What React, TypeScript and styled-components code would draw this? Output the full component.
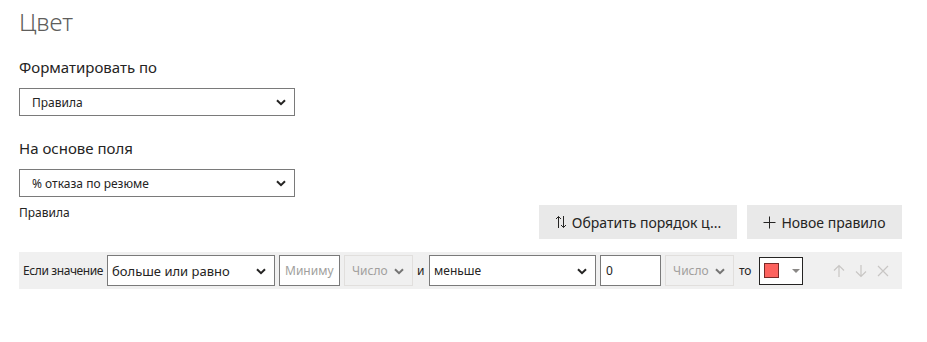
import React from "react"
import styled, { createGlobalStyle } from "styled-components"

const Global = createGlobalStyle`
  body {
    margin: 0;
    background: #ffffff;
    font-family: "Noto Sans", "Open Sans", sans-serif;
    color: #252423;
  }
`

const Page = styled.div`
  width: 883px;
  padding: 6px 0 0 19px;
`

const Title = styled.h1`
  margin: 0;
  font-size: 24px;
  font-weight: 300;
  color: #605e5c;
  line-height: 32px;
`

const SectionLabel = styled.div<{ $mt: number }>`
  margin-top: ${(p) => p.$mt}px;
  font-size: 15px;
  line-height: 20px;
  color: #252423;
`

const SelectBox = styled.div<{ $w: number; $h: number; $disabled?: boolean }>`
  position: relative;
  width: ${(p) => p.$w}px;
  height: ${(p) => p.$h}px;
  box-sizing: border-box;
  border: 1px solid ${(p) => (p.$disabled ? "#e1dfdd" : "#7a7a7a")};
  background: ${(p) => (p.$disabled ? "#f0f0f0" : "#ffffff")};
  flex: none;
`

const NativeSelect = styled.select<{ $pad: number; $size: number; $disabled?: boolean }>`
  appearance: none;
  width: 100%;
  height: 100%;
  border: 0;
  outline: none;
  background: transparent;
  padding: 0 20px 0 ${(p) => p.$pad}px;
  font-family: "Noto Sans", "Open Sans", sans-serif;
  font-size: ${(p) => p.$size}px;
  color: ${(p) => (p.$disabled ? "#a19f9d" : "#252423")};
`

const Chevron = styled.svg<{ $faded?: boolean }>`
  position: absolute;
  right: 8px;
  top: 50%;
  margin-top: -3px;
  width: 10px;
  height: 7px;
  pointer-events: none;
  opacity: ${(p) => (p.$faded ? 0.6 : 1)};
`

const FieldSelect = styled(SelectBox)`
  margin-top: 11px;
`

const RulesHeader = styled.div`
  display: flex;
  justify-content: space-between;
  align-items: flex-start;
  margin-top: 8px;
`

const SmallLabel = styled.div`
  font-size: 12px;
  line-height: 16px;
  color: #252423;
`

const Buttons = styled.div`
  display: flex;
  gap: 10px;
`

const GrayButton = styled.button<{ $w: number }>`
  display: flex;
  align-items: center;
  justify-content: center;
  gap: 5px;
  width: ${(p) => p.$w}px;
  height: 34px;
  border: 0;
  background: #e9e9e9;
  font-family: "Noto Sans", "Open Sans", sans-serif;
  font-size: 14px;
  color: #252423;
  padding: 0;
`

const RuleRow = styled.div`
  display: flex;
  align-items: center;
  height: 37px;
  margin-top: 13px;
  padding: 0 4px;
  background: #f0f0f0;
  gap: 4px;
`

const RowText = styled.span<{ $ml?: number; $mr?: number }>`
  font-size: 12px;
  letter-spacing: -0.4px;
  color: #252423;
  margin: 0 ${(p) => p.$mr ?? 0}px 0 ${(p) => p.$ml ?? 0}px;
  white-space: nowrap;
`

const TextInput = styled.input<{ $w: number }>`
  width: ${(p) => p.$w}px;
  height: 31px;
  box-sizing: border-box;
  border: 1px solid #7a7a7a;
  padding: 0 5px;
  font-family: "Noto Sans", "Open Sans", sans-serif;
  font-size: 12px;
  color: #252423;
  outline: none;
  flex: none;
  &::placeholder {
    color: #a19f9d;
  }
`

const ColorPicker = styled.div`
  display: flex;
  align-items: center;
  gap: 13px;
  width: 44px;
  height: 28px;
  box-sizing: border-box;
  border: 1px solid #252423;
  background: #fff;
  padding-left: 4px;
  margin-left: 4px;
`

const Swatch = styled.div`
  width: 15px;
  height: 15px;
  background: #fd625e;
  border: 1px solid #7a2a28;
  box-sizing: border-box;
`

const Caret = styled.div`
  width: 0;
  height: 0;
  border-left: 4px solid transparent;
  border-right: 4px solid transparent;
  border-top: 4px solid #8a8886;
`

const RowIcons = styled.div`
  display: flex;
  gap: 8px;
  margin-left: auto;
  margin-right: 8px;
  color: #c8c6c4;
`

const ChevronIcon = ({ faded }: { faded?: boolean }) => (
  <Chevron $faded={faded} viewBox="0 0 10 7">
    <path d="M1 1.2 L5 5.2 L9 1.2" fill="none" stroke="#252423" strokeWidth="2" />
  </Chevron>
)

const Dropdown = ({
  w,
  h,
  value,
  size = 12,
  pad = 12,
  disabled,
}: {
  w: number
  h: number
  value: string
  size?: number
  pad?: number
  disabled?: boolean
}) => (
  <SelectBox $w={w} $h={h} $disabled={disabled}>
    <NativeSelect $pad={pad} $size={size} $disabled={disabled} defaultValue={value}>
      <option>{value}</option>
    </NativeSelect>
    <ChevronIcon faded={disabled} />
  </SelectBox>
)

const Icon = ({ d }: { d: string }) => (
  <svg width="14" height="14" viewBox="0 0 14 14" fill="none" stroke="currentColor" strokeWidth="1.2">
    <path d={d} />
  </svg>
)

export default function App() {
  return (
    <>
      <Global />
      <Page>
        <Title>Цвет</Title>
        <SectionLabel $mt={19}>Форматировать по</SectionLabel>
        <FieldSelect $w={276} $h={28}>
          <NativeSelect $pad={12} $size={12} defaultValue="Правила">
            <option>Правила</option>
          </NativeSelect>
          <ChevronIcon />
        </FieldSelect>
        <SectionLabel $mt={22}>На основе поля</SectionLabel>
        <FieldSelect $w={276} $h={28}>
          <NativeSelect $pad={12} $size={12} defaultValue="% отказа по резюме">
            <option>% отказа по резюме</option>
          </NativeSelect>
          <ChevronIcon />
        </FieldSelect>
        <RulesHeader>
          <SmallLabel>Правила</SmallLabel>
          <Buttons>
            <GrayButton $w={198}>
              <svg width="12" height="14" viewBox="0 0 12 14" fill="none" stroke="#252423" strokeWidth="1">
                <path d="M3.5 13 V1.5 M1 4 L3.5 1.5 L6 4 M8.5 1 V12.5 M6 10 L8.5 12.5 L11 10" />
              </svg>
              Обратить порядок ц...
            </GrayButton>
            <GrayButton $w={155}>
              <svg width="13" height="13" viewBox="0 0 13 13" fill="none" stroke="#252423" strokeWidth="1">
                <path d="M6.5 0.5 V12.5 M0.5 6.5 H12.5" />
              </svg>
              Новое правило
            </GrayButton>
          </Buttons>
        </RulesHeader>
        <RuleRow>
          <RowText>Если значение</RowText>
          <Dropdown w={168} h={31} value="больше или равно" size={13} pad={4} />
          <TextInput $w={61} placeholder="Минимум" />
          <Dropdown w={69} h={31} value="Число" pad={7} disabled />
          <RowText $ml={0} $mr={1}>и</RowText>
          <Dropdown w={167} h={31} value="меньше" pad={4} />
          <TextInput $w={61} defaultValue="0" />
          <Dropdown w={69} h={31} value="Число" pad={7} disabled />
          <RowText $ml={1} $mr={0}>то</RowText>
          <ColorPicker>
            <Swatch />
            <Caret />
          </ColorPicker>
          <RowIcons>
            <Icon d="M7 13 V1.5 M2 6.5 L7 1.5 L12 6.5" />
            <Icon d="M7 1 V12.5 M2 7.5 L7 12.5 L12 7.5" />
            <Icon d="M2 2 L12 12 M12 2 L2 12" />
          </RowIcons>
        </RuleRow>
      </Page>
    </>
  )
}
